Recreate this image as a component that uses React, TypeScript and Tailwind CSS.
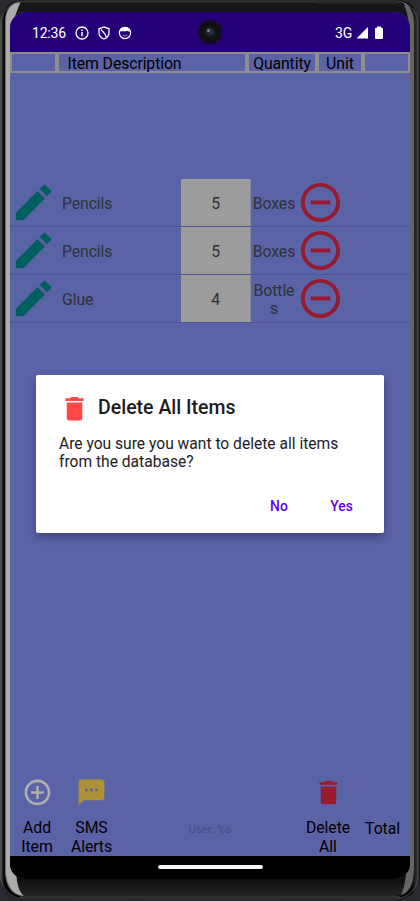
import React from "react";

const PENCIL = "M3 17.25V21h3.75L17.81 9.94l-3.75-3.75L3 17.25zM20.71 7.04c.39-.39.39-1.02 0-1.41l-2.34-2.34c-.39-.39-1.02-.39-1.41 0l-1.83 1.83 3.75 3.75 1.83-1.83z";
const TRASH = "M6 19.600c0 .9.7 1.600 1.600 1.600h8.800c.9 0 1.600-.7 1.600-1.600V7.400H6v12.200zM19 4h-3.300l-1.500-1h-4.400l-1.500 1H5v2.100h14V4z";
const MINUS = "M7 11v2h10v-2H7zm5-9C6.48 2 2 6.48 2 12s4.48 10 10 10 10-4.48 10-10S17.52 2 12 2zm0 18c-4.41 0-8-3.59-8-8s3.59-8 8-8 8 3.59 8 8-3.59 8-8 8z";
const PLUS = "M13 7h-2v4H7v2h4v4h2v-4h4v-2h-4V7zm-1-5C6.48 2 2 6.48 2 12s4.48 10 10 10 10-4.48 10-10S17.52 2 12 2zm0 18c-4.41 0-8-3.59-8-8s3.59-8 8-8 8 3.59 8 8-3.59 8-8 8z";
const SMS = "M20 2H4c-1.1 0-1.99.9-1.99 2L2 22l4-4h14c1.1 0 2-.9 2-2V4c0-1.1-.9-2-2-2zM9 11H7V9h2v2zm4 0h-2V9h2v2zm4 0h-2V9h2v2z";

function Icon({ d, className }: { d: string; className: string }) {
  return (
    <svg viewBox="0 0 24 24" fill="currentColor" className={className}>
      <path d={d} />
    </svg>
  );
}

function Bezel() {
  return (
    <svg className="absolute inset-0" width="420" height="901" viewBox="0 0 420 901">
      <defs>
        <linearGradient id="side" x1="0" x2="1" y1="0" y2="0">
          <stop offset="0" stopColor="#555755" />
          <stop offset="0.005" stopColor="#303230" />
          <stop offset="0.009" stopColor="#050505" />
          <stop offset="0.98" stopColor="#080808" />
          <stop offset="0.992" stopColor="#2f2f2c" />
          <stop offset="1" stopColor="#151515" />
        </linearGradient>
        <linearGradient id="cap" x1="0" x2="0" y1="0" y2="1">
          <stop offset="0" stopColor="#161616" />
          <stop offset="0.9" stopColor="#0b0b0b" />
          <stop offset="0.975" stopColor="#080808" />
          <stop offset="0.99" stopColor="#191919" />
          <stop offset="1" stopColor="#242424" />
        </linearGradient>
      </defs>
      <rect width="420" height="901" fill="#29292f" />
      <rect x="0" y="0" width="420" height="900" rx="24" fill="url(#side)" />
      <rect x="1" y="1" width="417" height="898" rx="23" fill="none" stroke="#4d4e4d" strokeWidth="1" />
      <rect x="5" y="2" width="409" height="894" rx="21" fill="url(#cap)" />
      <path d="M21 2C11 2 5 9 5 22V870C5 885 12 896 24 896C18 891 16 880 16 868L10 858V28C14 20 17 9 21 2Z" fill="#777" />
      <path d="M20 3C11 3 6 10 6 22V870C6 884 13 895 23 895.500C18 891 16 880 16 868L11 858V28C14 20 17 9 20 3Z" fill="#acacac" />
      <path d="M403 2C410 5 414 12 414 24V868C414 882 410 893 401 895C404 889 406 878 407 865L410 858V28C408 19 407 10 403 2Z" fill="#656565" />
      <path d="M20 897H400" stroke="#565656" strokeWidth="1" />
      <path d="M20 2H316L319 3H402" fill="none" stroke="#353535" strokeWidth="1" />
    </svg>
  );
}

function StatusBar() {
  return (
    <div className="relative flex h-10 shrink-0 items-center bg-[#240078] pl-[22px] text-white">
      <span className="w-[43px] pt-[2px] text-[14px] tracking-[-0.2px]">12:36</span>
      <svg className="mt-px" width="14" height="14" viewBox="0 0 14 14" fill="none" stroke="white" strokeWidth="1.3">
        <circle cx="7" cy="7" r="6" />
        <path d="M7 6v4.2M7 3.5v1.4" strokeWidth="1.5" />
      </svg>
      <svg className="ml-2 mt-px" width="14" height="14" viewBox="0 0 14 14" fill="none" stroke="white" strokeWidth="1.3">
        <path d="M7 .9 12 2.8v3.6c0 3-2 5.400-5 6.600-3-1.200-5-3.600-5-6.600V2.8L7 .9ZM4.200 3.200c.3 2.600 5 3.500 4.800 7.800" />
      </svg>
      <svg className="ml-[7px] mt-px" width="14" height="14" viewBox="0 0 14 14">
        <circle cx="7" cy="7" r="5.600" fill="none" stroke="white" strokeWidth="1.2" />
        <path d="M1.500 5C1.800 2.200 4.200 1 7 1s5.200 1.200 5.500 4l-2 .5-1.500-.7-2 .8-1.500-.7-1.500.7Z" fill="white" />
        <path d="M4.500 9c1.400 1.300 3.600 1.300 5-.3" stroke="white" strokeWidth=".6" fill="none" />
      </svg>
      <svg className="absolute left-[187px] top-[7px]" width="26" height="26" viewBox="0 0 26 26">
        <circle cx="13" cy="13" r="12" fill="#101014" />
        <circle cx="13" cy="13" r="6" fill="#17181d" />
        <circle cx="12.5" cy="12.5" r="3.8" fill="#252a34" />
        <circle cx="11.5" cy="11.5" r="1.5" fill="#78818e" />
        <circle cx="15.5" cy="13.5" r="1.2" fill="#123f66" />
      </svg>
      <span className="ml-auto pt-[2px] text-[14px] tracking-[-0.2px]">3G</span>
      <svg className="ml-[4px] mt-px" width="13" height="12" viewBox="0 0 13 12"><path d="M12 0v11.5H.5Z" fill="white" /></svg>
      <svg className="ml-[5px] mr-[26px] mt-px" width="10" height="14" viewBox="0 0 10 14"><path d="M3 .5h4v1.300h.7c.8 0 1.300.5 1.300 1.200v8.800c0 .8-.5 1.300-1.300 1.300H2.300C1.500 13.100 1 12.600 1 11.800V3c0-.7.5-1.200 1.300-1.200H3Z" fill="white" /></svg>
    </div>
  );
}

function TableHeader() {
  const cell = "flex h-[17px] items-center justify-center bg-[#5b63a7]";
  return (
    <div className="flex h-[21px] shrink-0 gap-1 bg-[#8e8e8e] px-[2px] pt-[2px] text-[15.8px] leading-[17px] text-black">
      <div className={`${cell} w-[43px]`} />
      <div className={`${cell} w-[186px]`}><span className="w-full pl-[8.5px] pt-[2px] tracking-[-0.1px]">Item Description</span></div>
      <div className={`${cell} w-[66px]`}><span className="pt-[2px] tracking-[-0.1px]">Quantity</span></div>
      <div className={`${cell} w-[42px]`}><span className="pt-[2px]">Unit</span></div>
      <div className={`${cell} w-[43px]`} />
    </div>
  );
}

const items = [
  { name: "Pencils", qty: 5, unit: "Boxes" },
  { name: "Pencils", qty: 5, unit: "Boxes" },
  { name: "Glue", qty: 4, unit: "Bottles" },
];

function ItemRow({ name, qty, unit }: { name: string; qty: number; unit: string }) {
  return (
    <div className="flex h-12 items-center border-b border-[#50559a] text-[15.8px] leading-[18.5px] text-[#303039]">
      <div className="w-[51px]"><Icon d={PENCIL} className="size-[47px] text-[#00605e]" /></div>
      <span className="w-[119.5px] pl-[1px] pt-[4px] tracking-[-0.1px]">{name}</span>
      <div className="flex h-full w-[70.5px] items-center justify-center border-r border-[#8588a5] bg-[#9c9c9c] pl-px pt-[4px]">{qty}</div>
      <span className="w-[46px] break-all px-[1px] pt-[3px] text-center tracking-[-0.1px]">{unit}</span>
      <Icon d={MINUS} className="size-[47px] text-[#981b30]" />
    </div>
  );
}

function BottomBar() {
  return (
    <div className="mt-auto flex h-[79px] text-center text-[15.8px] leading-[18.3px] text-black">
      <div className="flex w-[54px] flex-col items-center"><Icon d={PLUS} className="size-[31px] text-[#afafb0]" /><span className="mt-[11.5px]">Add<br />Item</span></div>
      <div className="flex w-[55px] flex-col items-center"><Icon d={SMS} className="size-[31px] text-[#ad9136]" /><span className="mt-[11.5px] tracking-[-0.1px]">SMS<br />Alerts</span></div>
      <div className="w-[182px] pt-[44px] text-[11.3px] text-[#454b86]">User: %s</div>
      <div className="flex w-[54px] flex-col items-center"><Icon d={TRASH} className="size-[31px] text-[#981b30]" /><span className="mt-[11.5px] tracking-[-0.05px]">Delete<br />All</span></div>
      <div className="w-[55px] pt-[42.5px] tracking-[-0.1px]">Total</div>
    </div>
  );
}

function DeleteDialog() {
  return (
    <div role="dialog" className="absolute left-[26px] top-[363px] flex h-[158px] w-[348px] flex-col rounded-[2px] bg-white text-[#1b1b1f] shadow-[0_4px_9px_0px_rgba(20,20,60,0.4)]">
      <div className="flex items-center pl-[23px] pt-[16px]">
        <Icon d={TRASH} className="mt-[2px] size-[31px] text-[#ff4646]" />
        <h2 className="ml-[8px] text-[19.5px] font-medium leading-[30px]">Delete All Items</h2>
      </div>
      <p className="px-[23px] pt-[11px] text-[15.6px] leading-[18.3px]">Are you sure you want to delete all items<br />from the database?</p>
      <div className="mt-auto flex justify-end pb-[17px] pr-[31px] text-[13.8px] font-medium leading-[20px] text-[#6200ee]">
        <button className="tracking-[0.3px]">No</button>
        <button className="ml-[42px] tracking-[0.1px]">Yes</button>
      </div>
    </div>
  );
}

export default function App() {
  return (
    <div className="relative h-[901px] w-[420px] overflow-hidden px-[10px] pt-3 font-[Roboto,sans-serif]">
      <Bezel />
      <main className="relative flex h-[867px] w-[400px] flex-col overflow-hidden rounded-t-[16px] rounded-b-[15px] bg-[#5b63a7]">
        <StatusBar />
        <TableHeader />
        <div className="mt-[106px]">
          {items.map((item, i) => <ItemRow key={i} {...item} />)}
        </div>
        <BottomBar />
        <div className="flex h-[23px] shrink-0 justify-center bg-black pt-[9px]"><div className="h-1 w-[105px] rounded-full bg-[#f4f4f4]" /></div>
        <DeleteDialog />
      </main>
    </div>
  );
}
